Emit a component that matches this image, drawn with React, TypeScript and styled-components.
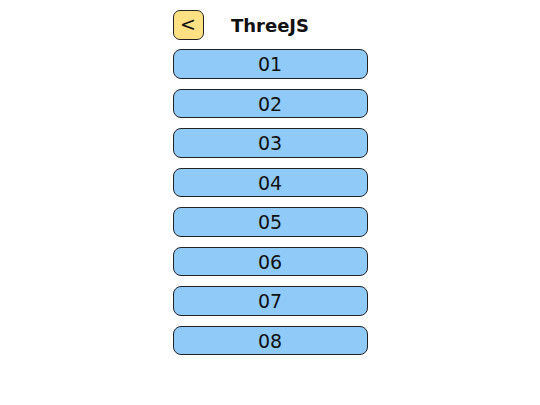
import React from "react";
import styled, { createGlobalStyle } from "styled-components";

const GlobalStyle = createGlobalStyle`
  html, body {
    margin: 0;
    padding: 0;
    background: #ffffff;
    font-family: "DejaVu Sans", Verdana, sans-serif;
  }
`;

const Page = styled.main`
  display: flex;
  justify-content: center;
  padding-top: 10px;
`;

const Column = styled.div`
  width: 195px;
  display: flex;
  flex-direction: column;
  gap: 10px;
`;

const Header = styled.header`
  display: grid;
  grid-template-columns: 31px 1fr 31px;
  align-items: center;
  height: 30px;
  margin-bottom: -1px;
`;

const BackButton = styled.button`
  width: 31px;
  height: 30px;
  padding: 0 0 2px;
  box-sizing: border-box;
  border: 1.5px solid #222;
  border-radius: 7px;
  background: #ffe082;
  color: #111;
  font-family: "DejaVu Sans", sans-serif;
  font-size: 19px;
  line-height: 1;
  cursor: pointer;
`;

const Title = styled.h1`
  margin: 0;
  text-align: center;
  font-size: 18px;
  font-weight: bold;
  color: #111;
`;

const LessonButton = styled.button`
  height: 29.5px;
  box-sizing: border-box;
  border: 1.5px solid #222;
  border-radius: 8px;
  background: #90caf9;
  color: #111;
  font-family: "DejaVu Sans", sans-serif;
  font-size: 19px;
  line-height: 1;
  padding: 2px 0 0;
  cursor: pointer;
`;

const lessons = ["01", "02", "03", "04", "05", "06", "07", "08"];

export default function App() {
  return (
    <>
      <GlobalStyle />
      <Page>
        <Column>
          <Header>
            <BackButton>&lt;</BackButton>
            <Title>ThreeJS</Title>
            <span />
          </Header>
          {lessons.map((n) => (
            <LessonButton key={n}>{n}</LessonButton>
          ))}
        </Column>
      </Page>
    </>
  );
}
